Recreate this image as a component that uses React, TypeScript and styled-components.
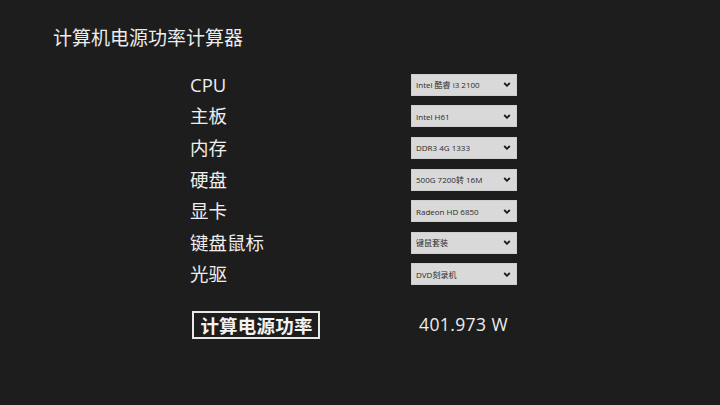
import React from "react";
import styled, { createGlobalStyle } from "styled-components";

const Global = createGlobalStyle`
  html, body { margin: 0; padding: 0; background: #1d1d1d; }
  body { width: 720px; height: 405px; overflow: hidden; font-family: "Open Sans", "Noto Sans CJK SC", sans-serif; }
`;

const Page = styled.div`
  width: 720px;
  height: 405px;
  background: #1d1d1d;
  color: #e6e6e6;
  box-sizing: border-box;
  padding: 24px 0 0 53px;
`;

const Title = styled.h1`
  margin: 0;
  font-family: "Noto Sans CJK SC", sans-serif;
  font-weight: 400;
  font-size: 19px;
  line-height: 26px;
  color: #ececec;
`;

const Form = styled.div`
  margin: 19px 0 0 137px;
  display: grid;
  grid-template-columns: 221px 106px;
  grid-auto-rows: 31.6px;
  align-items: center;
`;

const Label = styled.div`
  font-family: "Open Sans", "Noto Sans CJK SC", sans-serif;
  font-size: 18.5px;
  line-height: 22px;
  color: #eeeeee;
`;

const SelectBox = styled.div`
  height: 22px;
  box-sizing: border-box;
  background: #d9d9d9;
  border: 1px solid #cfcfcf;
  display: flex;
  align-items: center;
  justify-content: space-between;
  padding: 0 5px 0 4px;
  font-family: "Open Sans", "Noto Sans CJK SC", sans-serif;
  font-size: 8px;
  color: #2a2a2a;
`;

const Chevron = styled.svg`
  width: 8px;
  height: 5px;
  display: block;
`;

const Footer = styled.div`
  margin: 21px 0 0 139px;
  display: flex;
  align-items: center;
`;

const CalcButton = styled.button`
  width: 128px;
  height: 28px;
  box-sizing: border-box;
  background: transparent;
  border: 2px solid #e8e8e8;
  color: #f2f2f2;
  font-family: "Noto Sans CJK SC", sans-serif;
  font-weight: 700;
  font-size: 18.5px;
  line-height: 22px;
  padding: 0 0 0 1px;
  text-align: center;
  margin: 0;
  letter-spacing: 0.2px;
`;

const Result = styled.div`
  margin-left: 99px;
  font-family: "Open Sans", sans-serif;
  font-size: 17.5px;
  color: #ededed;
  letter-spacing: 0.4px;
  margin-top: -2px;
`;

const rows: [string, string][] = [
  ["CPU", "Intel 酷睿 i3 2100"],
  ["主板", "Intel H61"],
  ["内存", "DDR3 4G 1333"],
  ["硬盘", "500G 7200转 16M"],
  ["显卡", "Radeon HD 6850"],
  ["键盘鼠标", "键鼠套装"],
  ["光驱", "DVD刻录机"],
];

export default function App() {
  return (
    <>
      <Global />
      <Page>
        <Title>计算机电源功率计算器</Title>
        <Form>
          {rows.map(([label, value]) => (
            <React.Fragment key={label}>
              <Label>{label}</Label>
              <SelectBox>
                <span>{value}</span>
                <Chevron viewBox="0 0 8 5">
                  <path d="M1.2 1 L4 3.8 L6.8 1" fill="none" stroke="#1a1a1a" strokeWidth="1.8" />
                </Chevron>
              </SelectBox>
            </React.Fragment>
          ))}
        </Form>
        <Footer>
          <CalcButton>计算电源功率</CalcButton>
          <Result>401.973 W</Result>
        </Footer>
      </Page>
    </>
  );
}
